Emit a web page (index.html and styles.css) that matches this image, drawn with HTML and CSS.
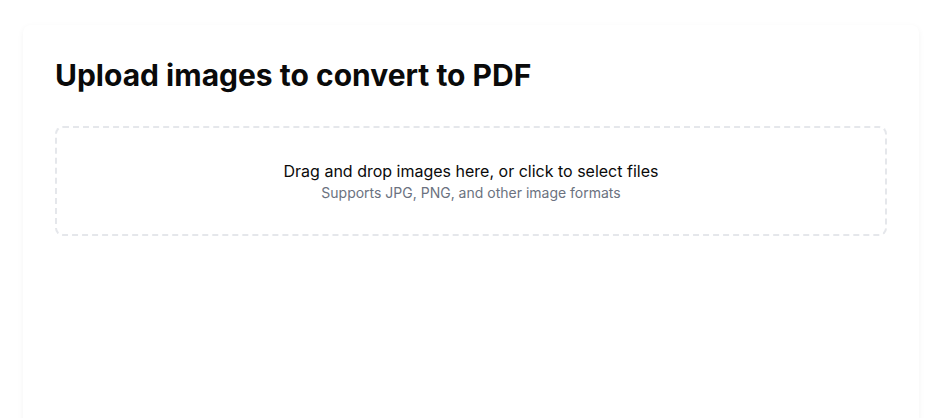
FILE: index.html
```html
<!DOCTYPE html>
<html lang="en">

<head>
    <meta charset="UTF-8">
    <meta name="viewport" content="width=device-width, initial-scale=1.0">
    <title>Images to PDF</title>
    <link rel="stylesheet" href="styles.css">
</head>

<body>
    <div class="page">
        <div class="card">
            <h1>Upload images to convert to PDF</h1>
            <div class="dropzone" id="dropzone">
                <p class="drop-title">Drag and drop images here, or click to select files</p>
                <p class="drop-hint">Supports JPG, PNG, and other image formats</p>
            </div>
        </div>
    </div>
</body>

</html>
```

FILE: styles.css
```css
body {
    font-family: Inter, "Liberation Sans", Arial, sans-serif;
    margin: 0;
    background-color: #ffffff;
    color: #111111;
}

.page {
    padding: 25px 0 0 23px;
}

.card {
    width: 896px;
    min-height: 600px;
    box-sizing: border-box;
    padding: 32px;
    background-color: white;
    border-radius: 8px;
    box-shadow: 0 2px 6px rgba(0, 0, 0, 0.05);
}

h1 {
    margin: 0 0 33px;
    font-size: 30px;
    line-height: 36px;
    font-weight: 700;
    color: #0a0a0a;
}

.dropzone {
    border: 2px dashed #e5e7eb;
    border-radius: 8px;
    padding: 31px 16px;
    text-align: center;
    cursor: pointer;
}

.dropzone p {
    margin: 0;
}

.drop-title {
    font-size: 16px;
    line-height: 24px;
    color: #0a0a0a;
}

.drop-hint {
    font-size: 14px;
    line-height: 20px;
    color: #6b7280;
}
```
